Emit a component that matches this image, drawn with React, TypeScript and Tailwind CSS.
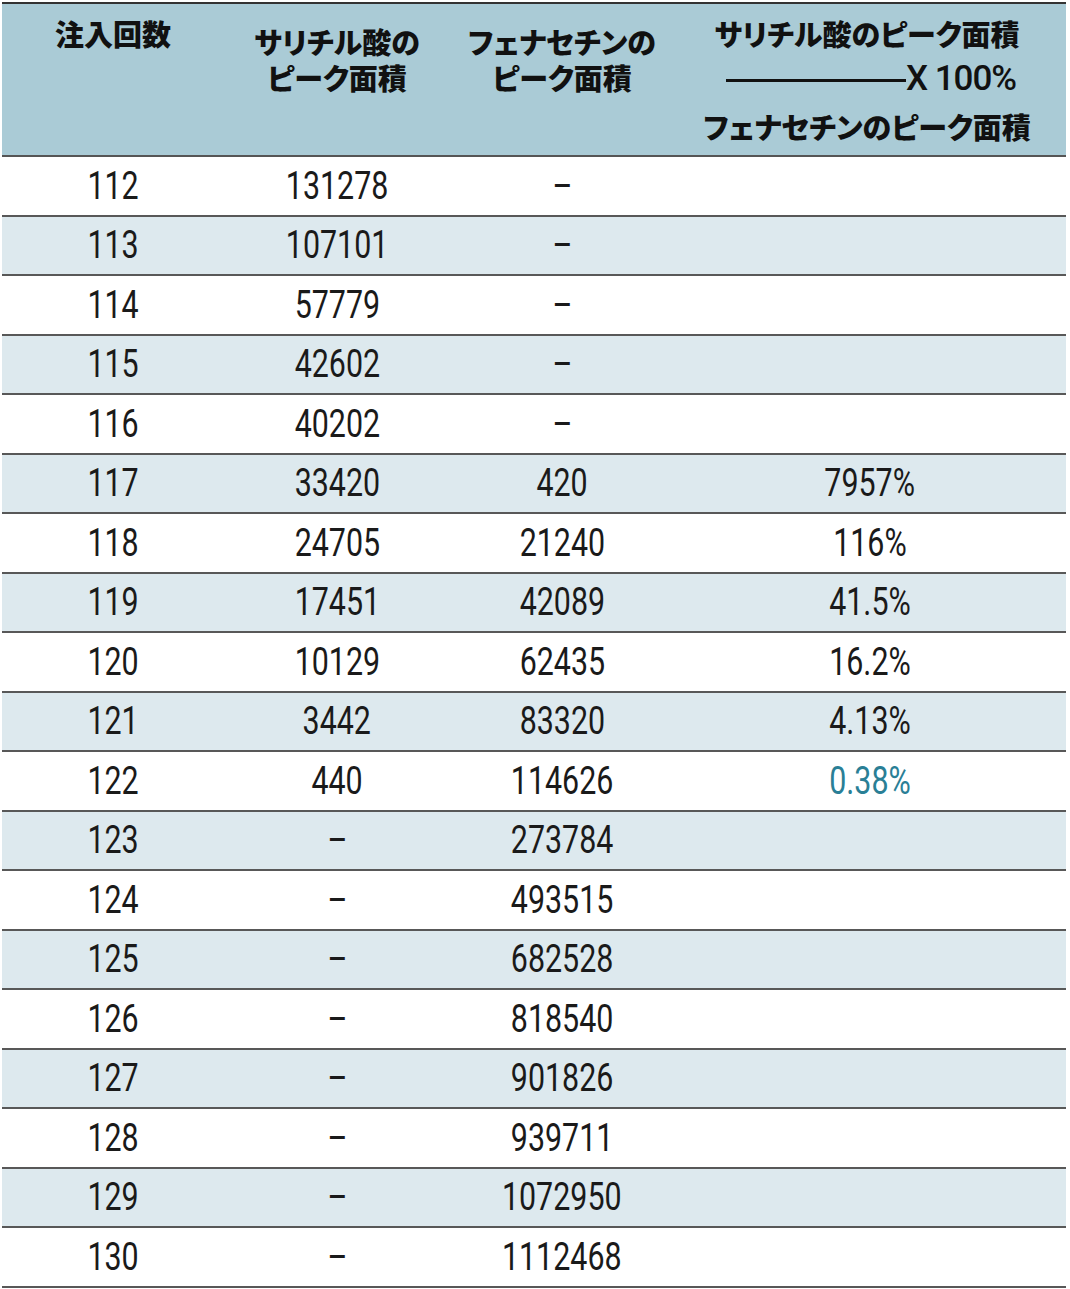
const rows: [string, string, string, string][] = [
  ["112", "131278", "–", ""],
  ["113", "107101", "–", ""],
  ["114", "57779", "–", ""],
  ["115", "42602", "–", ""],
  ["116", "40202", "–", ""],
  ["117", "33420", "420", "7957%"],
  ["118", "24705", "21240", "116%"],
  ["119", "17451", "42089", "41.5%"],
  ["120", "10129", "62435", "16.2%"],
  ["121", "3442", "83320", "4.13%"],
  ["122", "440", "114626", "0.38%"],
  ["123", "–", "273784", ""],
  ["124", "–", "493515", ""],
  ["125", "–", "682528", ""],
  ["126", "–", "818540", ""],
  ["127", "–", "901826", ""],
  ["128", "–", "939711", ""],
  ["129", "–", "1072950", ""],
  ["130", "–", "1112468", ""],
];

const jp =
  "font-['Noto_Sans_CJK_JP',sans-serif] font-black text-[29px] leading-[36px] [font-feature-settings:'palt'] text-[#111]";

function Num({ v, teal }: { v: string; teal?: boolean }) {
  return (
    <div className="flex justify-center">
      <span
        className={`inline-block scale-x-[0.8] font-['Roboto',sans-serif] text-[38px] leading-none ${
          teal ? "text-[#2a7f96]" : "text-[#1a1a1a]"
        }`}
      >
        {v}
      </span>
    </div>
  );
}

export default function App() {
  return (
    <div className="min-h-[1289px] bg-white pt-[2px] pl-[2px]">
      <div className="w-[1064px] border-t-2 border-[#333]">
        <div className="grid h-[153px] grid-cols-[222px_226px_224px_1fr] border-b-2 border-[#555] bg-[#aacbd6]">
          <div className={`${jp} pt-[11px] text-center`}>注入回数</div>
          <div className={`${jp} pt-[19px] text-center`}>
            サリチル酸の
            <br />
            ピーク面積
          </div>
          <div className={`${jp} pt-[19px] text-center`}>
            フェナセチンの
            <br />
            ピーク面積
          </div>
          <div className={`${jp} flex flex-col items-center pt-[11px] pr-[6px]`}>
            <div>サリチル酸のピーク面積</div>
            <div className="mt-[10px] flex items-center pl-[8px]">
              <span className="mt-[2px] h-[3px] w-[180px] bg-[#111]" />
              <span className="font-['Roboto',sans-serif] text-[35px] leading-[36px] font-medium tracking-[-1px]">
                X 100%
              </span>
            </div>
            <div className="mt-[11px]">フェナセチンのピーク面積</div>
          </div>
        </div>
        {rows.map((r, i) => (
          <div
            key={r[0]}
            className={`grid h-[59.5px] grid-cols-[222px_226px_224px_1fr] items-center border-b-2 border-[#585858] ${
              i % 2 === 1 ? "bg-[#dde9ee]" : "bg-white"
            }`}
          >
            <Num v={r[0]} />
            <Num v={r[1]} />
            <Num v={r[2]} />
            <Num v={r[3]} teal={r[0] === "122"} />
          </div>
        ))}
      </div>
    </div>
  );
}
